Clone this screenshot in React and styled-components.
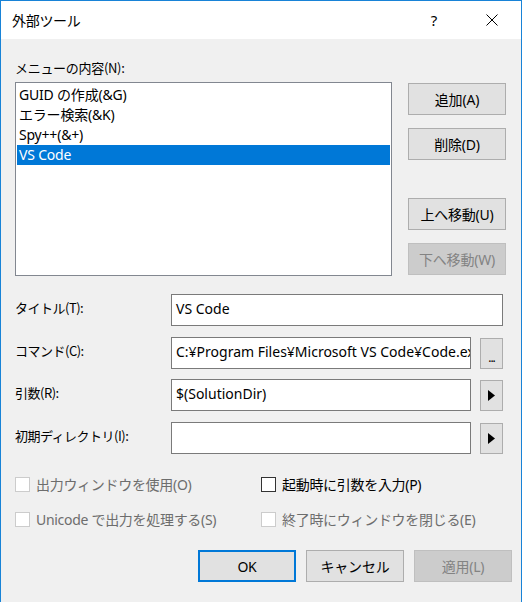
import React from "react";
import styled, { createGlobalStyle } from "styled-components";

const Global = createGlobalStyle`
  html, body { margin: 0; padding: 0; background: #f0f0f0; }
  body { font-family: "Noto Sans", "Noto Sans CJK JP", sans-serif; color: #000; }
  * { box-sizing: border-box; }
`;

const Window = styled.div`
  width: 522px;
  height: 602px;
  border: 1px solid #1883d7;
  border-bottom: none;
  background: #f0f0f0;
  display: flex;
  flex-direction: column;
  overflow: hidden;
`;

const TitleBar = styled.div`
  height: 38px;
  background: #fff;
  display: flex;
  align-items: center;
  padding-left: 11px;
`;

const TitleText = styled.div`
  flex: 1;
  font-size: 14px;
  font-family: "Noto Sans CJK JP", sans-serif;
  letter-spacing: -0.3px;
  margin-top: -1px;
`;

const TitleButton = styled.div`
  width: ${(p) => p.$w}px;
  height: 38px;
  display: flex;
  align-items: center;
  justify-content: center;
  font-size: 15px;
`;

const Body = styled.div`
  flex: 1;
  display: flex;
  flex-direction: column;
  padding: 19px 14px 0 14px;
`;

const Caption = styled.div`
  height: 20px;
  line-height: 20px;
  font-size: 13px;
  letter-spacing: -0.3px;
  font-family: "Noto Sans CJK JP", sans-serif;
`;

const TopSection = styled.div`
  display: flex;
  gap: 16px;
  margin-top: 4px;
`;

const ListBox = styled.div`
  flex: 1;
  height: 194px;
  background: #fff;
  border: 1px solid #828790;
  padding: 2px 1px;
`;

const ListItem = styled.div`
  height: 20px;
  line-height: 20px;
  padding-left: 2px;
  font-size: 14px;
  letter-spacing: -0.2px;
  background: ${(p) => (p.$selected ? "#0078d7" : "transparent")};
  color: ${(p) => (p.$selected ? "#fff" : "#000")};
  white-space: nowrap;
`;

const ButtonColumn = styled.div`
  width: 98px;
  display: flex;
  flex-direction: column;
  gap: 13px;
  padding-top: 1px;
  margin-right: 1px;
`;

const Spacer = styled.div`
  height: ${(p) => p.$h}px;
`;

const Button = styled.button`
  width: 98px;
  height: 32px;
  font-family: "Noto Sans", "Noto Sans CJK JP", sans-serif;
  font-size: 14px;
  letter-spacing: -0.2px;
  background: ${(p) => (p.disabled ? "#cccccc" : "#e1e1e1")};
  color: ${(p) => (p.disabled ? "#838383" : "#000")};
  border: ${(p) => (p.$default ? "2px solid #0078d7" : p.disabled ? "1px solid #bfbfbf" : "1px solid #adadad")};
  padding: 0;
  margin: 0;
  cursor: default;
`;

const Form = styled.div`
  display: grid;
  grid-template-columns: 156px 300px 32px;
  grid-auto-rows: 32px;
  row-gap: 10.7px;
  margin-top: 18px;
`;

const Label = styled.div`
  font-size: 13px;
  letter-spacing: -0.5px;
  font-family: "Noto Sans CJK JP", sans-serif;
  padding-top: 4px;
  line-height: 20px;
`;

const Input = styled.div`
  grid-column: ${(p) => (p.$wide ? "2 / 4" : "2 / 3")};
  background: #fff;
  border: 1px solid #7a7a7a;
  font-size: 14px;
  line-height: 20px;
  padding: 4px 4px;
  white-space: nowrap;
  overflow: hidden;
`;

const SmallButton = styled.div`
  width: 23px;
  height: 31px;
  margin-left: 9px;
  margin-top: 1px;
  background: #e1e1e1;
  border: 1px solid #adadad;
  display: flex;
  align-items: center;
  justify-content: center;
  font-size: 12px;
`;

const Dots = styled.span`
  margin-top: 8px;
  letter-spacing: -1px;
  font-size: 12px;
`;

const CheckGrid = styled.div`
  display: grid;
  grid-template-columns: 246px 1fr;
  grid-auto-rows: 20px;
  row-gap: 15px;
  margin-top: 20px;
`;

const CheckRow = styled.div`
  display: flex;
  align-items: center;
  gap: 6px;
  font-size: 14px;
  letter-spacing: -0.3px;
  color: ${(p) => (p.$disabled ? "#6d6d6d" : "#000")};
  white-space: nowrap;
`;

const Box = styled.span`
  width: 15px;
  height: 15px;
  background: #fff;
  border: 1px solid ${(p) => (p.$disabled ? "#cccccc" : "#333333")};
  flex: none;
`;

const Footer = styled.div`
  display: flex;
  justify-content: flex-end;
  gap: 10px;
  margin-top: 21px;
  margin-right: -5px;
`;

const Arrow = () => (
  <svg width="7" height="11" viewBox="0 0 7 11">
    <path d="M0 0 L7 5.5 L0 11 Z" fill="#000" />
  </svg>
);

const Close = () => (
  <svg width="12" height="12" viewBox="0 0 12 12">
    <path d="M0.5 0.5 L11.5 11.5 M11.5 0.5 L0.5 11.5" stroke="#000" strokeWidth="1" />
  </svg>
);

const items = ["GUID の作成(&G)", "エラー検索(&K)", "Spy++(&+)", "VS Code"];

export default function App() {
  return (
    <>
      <Global />
      <Window>
        <TitleBar>
          <TitleText>外部ツール</TitleText>
          <TitleButton $w={46}>?</TitleButton>
          <TitleButton $w={12} />
          <TitleButton $w={46}>
            <Close />
          </TitleButton>
          <TitleButton $w={6} />
        </TitleBar>
        <Body>
          <Caption>メニューの内容(N):</Caption>
          <TopSection>
            <ListBox>
              {items.map((t, i) => (
                <ListItem key={t} $selected={i === 3}>
                  {t}
                </ListItem>
              ))}
            </ListBox>
            <ButtonColumn>
              <Button>追加(A)</Button>
              <Button>削除(D)</Button>
              <Spacer $h={12} />
              <Button>上へ移動(U)</Button>
              <Button disabled>下へ移動(W)</Button>
            </ButtonColumn>
          </TopSection>
          <Form>
            <Label>タイトル(T):</Label>
            <Input $wide>VS Code</Input>
            <Label>コマンド(C):</Label>
            <Input>C:¥Program Files¥Microsoft VS Code¥Code.exe</Input>
            <SmallButton>
              <Dots>...</Dots>
            </SmallButton>
            <Label>引数(R):</Label>
            <Input>$(SolutionDir)</Input>
            <SmallButton>
              <Arrow />
            </SmallButton>
            <Label>初期ディレクトリ(I):</Label>
            <Input />
            <SmallButton>
              <Arrow />
            </SmallButton>
          </Form>
          <CheckGrid>
            <CheckRow $disabled>
              <Box $disabled />
              出力ウィンドウを使用(O)
            </CheckRow>
            <CheckRow>
              <Box />
              起動時に引数を入力(P)
            </CheckRow>
            <CheckRow $disabled>
              <Box $disabled />
              Unicode で出力を処理する(S)
            </CheckRow>
            <CheckRow $disabled>
              <Box $disabled />
              終了時にウィンドウを閉じる(E)
            </CheckRow>
          </CheckGrid>
          <Footer>
            <Button $default>OK</Button>
            <Button>キャンセル</Button>
            <Button disabled>適用(L)</Button>
          </Footer>
        </Body>
      </Window>
    </>
  );
}
